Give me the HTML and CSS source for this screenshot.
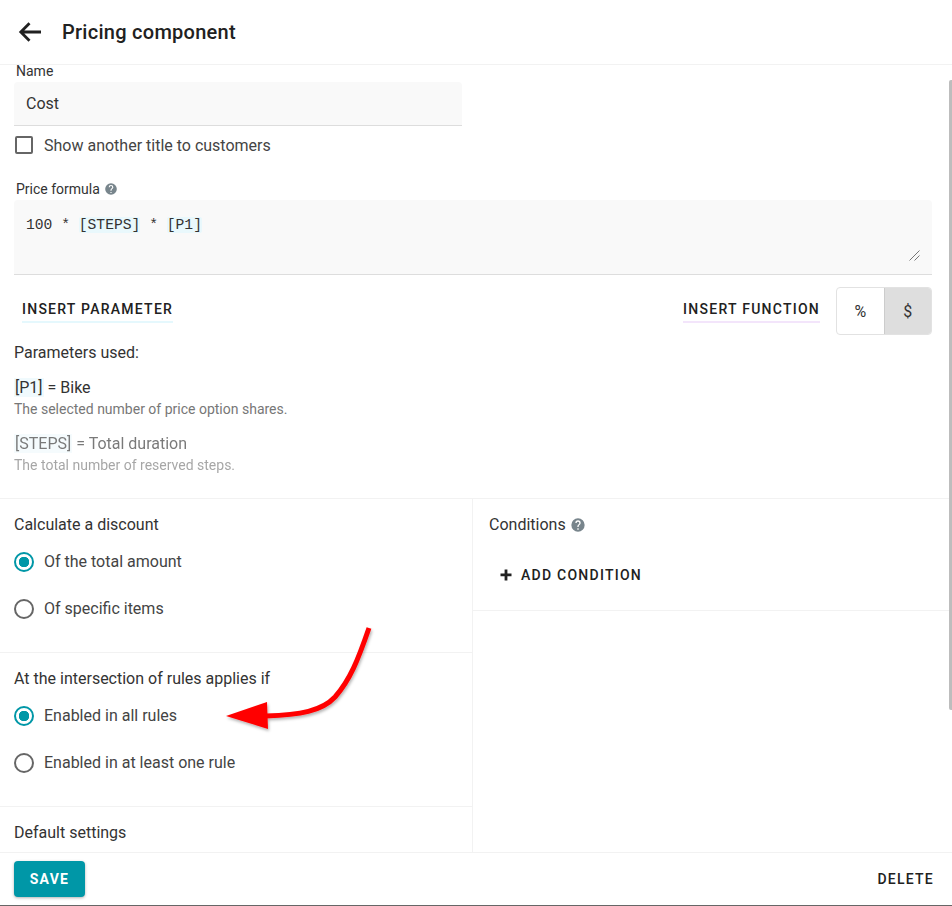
FILE: index.html
```html
<!DOCTYPE html>
<html lang="en">
<head>
<meta charset="utf-8">
<title>Pricing component</title>
<link rel="stylesheet" href="styles.css">
</head>
<body>
<div class="app">
  <header class="topbar">
    <svg class="back" viewBox="0 0 24 24" width="24" height="24"><path d="M23 12H3M11.5 3.2 2.8 12l8.7 8.8"/></svg>
    <h1 class="title">Pricing component</h1>
  </header>
  <main class="content">
    <div class="form">
      <label class="field-label name-label">Name</label>
      <div class="input">Cost</div>
      <div class="check-row"><span class="checkbox"></span><span>Show another title to customers</span></div>
      <label class="field-label formula-label">Price formula
        <svg class="help small" viewBox="0 0 24 24"><path d="M12 2a10 10 0 1 0 0 20 10 10 0 0 0 0-20zm1 17h-2v-2h2v2zm2.07-7.75-.9.92C13.45 12.9 13 13.5 13 15h-2v-.5c0-1.1.45-2.1 1.17-2.83l1.24-1.26c.37-.36.59-.86.59-1.41a2 2 0 1 0-4 0H8a4 4 0 1 1 8 0c0 .88-.36 1.68-.93 2.25z"/></svg>
      </label>
      <div class="textarea">
        <div class="code">100 * <span class="chip">[STEPS]</span> * <span class="chip">[P1]</span></div>
        <svg class="grip" viewBox="0 0 11 11" width="11" height="11"><path d="M0.5 10.5 10.5 0.5M5.5 10.5 10.5 5.5"/></svg>
      </div>
      <div class="actions">
        <span class="link link-blue">INSERT PARAMETER</span>
        <span class="link link-purple">INSERT FUNCTION</span>
        <div class="toggle"><span class="toggle-item">%</span><span class="toggle-item on">$</span></div>
      </div>
      <p class="used">Parameters used:</p>
      <div class="param">
        <div class="param-name"><span class="pchip">[P1]</span> = Bike</div>
        <div class="param-desc">The selected number of price option shares.</div>
      </div>
      <div class="param faded">
        <div class="param-name"><span class="pchip">[STEPS]</span> = Total duration</div>
        <div class="param-desc">The total number of reserved steps.</div>
      </div>
    </div>
    <div class="columns">
      <div class="col-left">
        <section class="group">
          <div class="group-title">Calculate a discount</div>
          <div class="radio-row"><span class="radio checked"></span><span class="radio-text">Of the total amount</span></div>
          <div class="radio-row"><span class="radio"></span><span class="radio-text">Of specific items</span></div>
        </section>
        <section class="group">
          <div class="group-title">At the intersection of rules applies if</div>
          <div class="radio-row"><span class="radio checked"></span><span class="radio-text">Enabled in all rules</span></div>
          <div class="radio-row"><span class="radio"></span><span class="radio-text">Enabled in at least one rule</span></div>
        </section>
        <section class="group last">
          <div class="group-title">Default settings</div>
        </section>
      </div>
      <div class="col-right">
        <section class="conditions">
          <div class="cond-title">Conditions
            <svg class="help" viewBox="0 0 24 24"><path d="M12 2a10 10 0 1 0 0 20 10 10 0 0 0 0-20zm1 17h-2v-2h2v2zm2.07-7.75-.9.92C13.45 12.9 13 13.5 13 15h-2v-.5c0-1.1.45-2.1 1.17-2.83l1.24-1.26c.37-.36.59-.86.59-1.41a2 2 0 1 0-4 0H8a4 4 0 1 1 8 0c0 .88-.36 1.68-.93 2.25z"/></svg>
          </div>
          <div class="add-cond">
            <svg class="plus" viewBox="0 0 12 12" width="12" height="12"><path d="M4.6 0.5h2.8v3.9h4.1v2.8H7.4v4.3H4.6V7.2H.5V4.4h4.1z"/></svg>
            <span>ADD CONDITION</span>
          </div>
        </section>
      </div>
    </div>
    <span class="scrollbar"></span>
  </main>
  <footer class="footer">
    <span class="save">SAVE</span>
    <span class="delete">DELETE</span>
  </footer>
  <svg class="arrow" viewBox="0 0 952 906" width="952" height="906">
    <defs><filter id="sh" x="-20%" y="-20%" width="140%" height="140%"><feDropShadow dx="1" dy="2" stdDeviation="1.5" flood-color="#000" flood-opacity=".3"/></filter></defs>
    <g filter="url(#sh)" fill="#f00">
      <path d="M369 628C358 660 350 680 335 697C322 711 300 715 266 716" fill="none" stroke="#f00" stroke-width="5"/>
      <path d="M226 716 267 702 268 729z"/>
    </g>
  </svg>
</div>
</body>
</html>
```
FILE: styles.css
```css
* { box-sizing: border-box; }
html, body { margin: 0; padding: 0; }
body { font-family: Roboto, "Liberation Sans", sans-serif; color: #212121; background: #fff; font-size: 16px; }
.app { position: relative; width: 952px; height: 906px; display: flex; flex-direction: column; overflow: hidden; border-bottom: 1px solid #666; }

.topbar { height: 65px; flex: none; display: flex; align-items: center; padding-left: 18px; border-bottom: 1px solid #f2f2f2; }
.back { fill: none; stroke: #212121; stroke-width: 2.8; flex: none; }
.title { margin: 0 0 1px 20px; font-size: 20px; line-height: 28px; font-weight: 500; letter-spacing: .27px; color: #212121; }

.content { position: relative; flex: 1; min-height: 0; }
.form { padding: 0 20px 0 14px; height: 433px; }
.field-label { display: block; font-size: 14px; line-height: 16px; padding-left: 2px; color: #333; }
.name-label { line-height: 13px; margin-bottom: 4px; }
.input { width: 448px; height: 44px; background: #f9f9f9; border-bottom: 1px solid #ddd; border-radius: 4px 4px 0 0; padding: 0 12px; line-height: 43px; color: #333; }
.check-row { display: flex; align-items: center; gap: 11px; height: 20px; margin-top: 9px; padding-left: 1px; color: #444; }
.checkbox { width: 18px; height: 18px; border: 2px solid #666; border-radius: 2px; }
.formula-label { margin-top: 26px; margin-bottom: 3px; display: flex; align-items: center; gap: 4px; }
.help { width: 16px; height: 16px; fill: #78858c; }
.help.small { width: 14px; height: 14px; }
.textarea { position: relative; height: 75px; background: #f9f9f9; border-bottom: 1px solid #ddd; border-radius: 4px 4px 0 0; padding: 15px 12px 0; }
.code { font-family: "Liberation Mono", monospace; font-size: 14.67px; line-height: 20px; color: #333; }
.chip { background: #e9f8fc; border-radius: 2px; }
.grip { position: absolute; right: 12px; bottom: 13px; fill: none; stroke: #555; stroke-width: .8; }
.actions { display: flex; align-items: center; height: 48px; margin-top: 12px; }
.link { font-size: 14px; font-weight: 500; letter-spacing: 1.25px; line-height: 20px; border-bottom: 2px solid; padding-bottom: 2px; margin-bottom: 1px; color: #212121; }
.link-blue { margin-left: 8px; border-color: #e5f8fd; }
.link-purple { margin-left: auto; border-color: #f3e5fb; }
.toggle { display: flex; width: 96px; height: 48px; margin-left: 16px; border: 1px solid #e2e2e2; border-radius: 4px; overflow: hidden; }
.toggle-item { flex: 1; display: flex; align-items: center; justify-content: center; font-size: 16px; color: #333; }
.toggle-item.on { background: #dedede; border-left: 1px solid #ccc; }
.used { margin: 8px 0 0; line-height: 20px; color: #333; }
.param { margin-top: 15px; }
.param + .param { margin-top: 17px; }
.param-name { line-height: 20px; color: #333; }
.pchip { background: #f0fafd; padding: 0 1px; }
.param-desc { font-size: 14px; line-height: 16px; margin-top: 3px; color: #777; }
.faded { opacity: .65; }

.columns { display: flex; border-top: 1px solid #f2f2f2; }
.col-left { width: 473px; border-right: 1px solid #f2f2f2; flex: none; }
.col-right { flex: 1; }
.group { height: 154px; padding: 16px 14px 0; border-bottom: 1px solid #f2f2f2; }
.group.last { height: 45px; border-bottom: 0; }
.group-title { line-height: 20px; color: #333; }
.radio-row { display: flex; align-items: center; gap: 10px; height: 20px; margin-top: 27px; color: #444; }
.group-title + .radio-row { margin-top: 17px; }
.radio-text { margin-bottom: 2px; }
.radio { width: 20px; height: 20px; border: 2px solid #666; border-radius: 50%; flex: none; }
.radio.checked { border-color: #0097a7; background: radial-gradient(circle, #0097a7 0 5px, #fff 5.5px); }
.conditions { height: 112px; padding: 16px 16px 0; border-bottom: 1px solid #f2f2f2; }
.cond-title { display: flex; align-items: center; gap: 4px; line-height: 20px; color: #333; }
.add-cond { display: flex; align-items: center; gap: 9px; margin-top: 30px; padding-left: 11px; font-size: 14px; font-weight: 500; letter-spacing: 1.25px; line-height: 20px; color: #212121; }
.plus { fill: #212121; flex: none; }
.scrollbar { position: absolute; right: 0; top: 15px; width: 3px; height: 630px; background: #bdbdbd; border-radius: 2px 0 0 2px; }

.footer { height: 53px; flex: none; border-top: 1px solid #f2f2f2; display: flex; align-items: center; justify-content: space-between; padding: 0 18px 0 14px; }
.save { width: 71px; height: 36px; margin-bottom: 1px; display: flex; align-items: center; justify-content: center; background: #0097a7; color: #fff; border-radius: 4px; font-size: 14px; font-weight: 700; letter-spacing: 1.25px; box-shadow: 0 1px 3px rgba(0,0,0,.3); }
.delete { font-size: 14px; font-weight: 500; letter-spacing: 1.25px; color: #212121; }
.arrow { position: absolute; left: 0; top: 0; pointer-events: none; }
```
